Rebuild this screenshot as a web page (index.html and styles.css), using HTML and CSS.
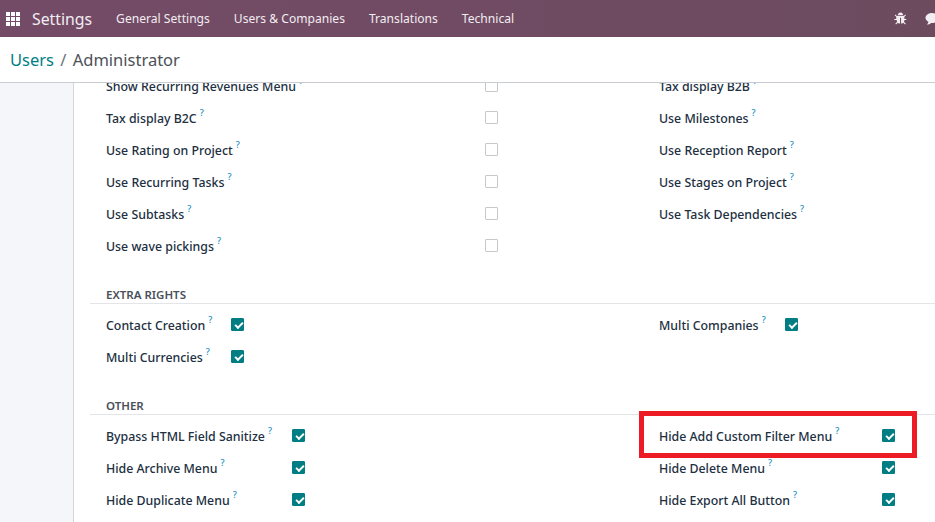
FILE: index.html
```html
<!DOCTYPE html>
<html lang="en">
<head>
<meta charset="utf-8">
<title>Users / Administrator</title>
<link rel="stylesheet" href="styles.css">
</head>
<body>
<header class="navbar">
  <svg class="apps" viewBox="0 0 14 14" width="14" height="14"><path fill="#fff" d="M0 0h4v4H0zM5 0h4v4H5zM10 0h4v4h-4zM0 5h4v4H0zM5 5h4v4H5zM10 5h4v4h-4zM0 10h4v4H0zM5 10h4v4H5zM10 10h4v4h-4z"/></svg>
  <span class="brand">Settings</span>
  <nav class="menu">
    <a>General Settings</a>
    <a>Users &amp; Companies</a>
    <a>Translations</a>
    <a>Technical</a>
  </nav>
  <div class="systray">
    <svg class="bug" viewBox="0 0 14 14" width="13" height="13"><path fill="#f2eef1" d="M4.300 3.200a2.700 2.700 0 0 1 5.400 0zM3.600 4h6.800l.2.200 1.500-1.500.8.800-1.700 1.700v2.300h2.100v1.100h-2.100c0 .8-.2 1.500-.5 2l2 2-.8.800-1.900-1.900c-.7.600-1.500 1-2.400 1V6.300H6.500v6.200c-.9 0-1.700-.4-2.400-1l-1.900 1.900-.8-.8 2-2c-.3-.5-.5-1.200-.5-2H.3V7.500h2.100V5.200L.7 3.500l.8-.8L3 4.200z"/></svg>
    <svg class="chat" viewBox="0 0 14 14" width="14" height="14"><path fill="#f2eef1" d="M7 1c3.600 0 6.500 2.200 6.500 5S10.600 11 7 11l-1-.1C5 11.900 3.500 12.500 2 12.500c.8-.8 1.300-1.800 1.400-2.700C1.700 8.900.5 7.500.5 6 .5 3.200 3.400 1 7 1z"/></svg>
  </div>
</header>
<div class="control">
  <h1 class="crumbs"><a>Users</a> <span class="sep">/</span> <span>Administrator</span></h1>
</div>
<main class="content">
  <aside class="side"></aside>
  <div class="sheet">
    <section class="group group-top">
      <div class="row"><div class="field"><label>Show Recurring Revenues Menu<sup>?</sup></label><i class="box"></i></div><div class="field"><label>Tax display B2B<sup>?</sup></label></div></div>
      <div class="row"><div class="field"><label>Tax display B2C<sup>?</sup></label><i class="box"></i></div><div class="field"><label>Use Milestones<sup>?</sup></label></div></div>
      <div class="row"><div class="field"><label>Use Rating on Project<sup>?</sup></label><i class="box"></i></div><div class="field"><label>Use Reception Report<sup>?</sup></label></div></div>
      <div class="row"><div class="field"><label>Use Recurring Tasks<sup>?</sup></label><i class="box"></i></div><div class="field"><label>Use Stages on Project<sup>?</sup></label></div></div>
      <div class="row"><div class="field"><label>Use Subtasks<sup>?</sup></label><i class="box"></i></div><div class="field"><label>Use Task Dependencies<sup>?</sup></label></div></div>
      <div class="row"><div class="field"><label>Use wave pickings<sup>?</sup></label><i class="box"></i></div></div>
    </section>
    <section class="group group-extra">
      <h2>EXTRA RIGHTS</h2>
      <div class="row"><div class="field"><label>Contact Creation<sup>?</sup></label><i class="box on"></i></div><div class="field"><label>Multi Companies<sup>?</sup></label><i class="box on"></i></div></div>
      <div class="row"><div class="field"><label>Multi Currencies<sup>?</sup></label><i class="box on"></i></div></div>
    </section>
    <section class="group group-other">
      <h2>OTHER</h2>
      <div class="row"><div class="field"><label>Bypass HTML Field Sanitize<sup>?</sup></label><i class="box on"></i></div><div class="field highlighted"><label>Hide Add Custom Filter Menu<sup>?</sup></label><i class="box on"></i><span class="redbox"></span></div></div>
      <div class="row"><div class="field"><label>Hide Archive Menu<sup>?</sup></label><i class="box on"></i></div><div class="field"><label>Hide Delete Menu<sup>?</sup></label><i class="box on"></i></div></div>
      <div class="row"><div class="field"><label>Hide Duplicate Menu<sup>?</sup></label><i class="box on"></i></div><div class="field"><label>Hide Export All Button<sup>?</sup></label><i class="box on"></i></div></div>
    </section>
  </div>
</main>
</body>
</html>
```
FILE: styles.css
```css
* { box-sizing: border-box; }
html, body { margin: 0; height: 100%; overflow: hidden; }
body {
  width: 935px;
  height: 522px;
  display: flex;
  flex-direction: column;
  font-family: "Noto Sans", "Open Sans", sans-serif;
  font-size: 13px;
  color: #212529;
  background: #fff;
}
.navbar {
  flex: none;
  height: 37px;
  display: flex;
  align-items: center;
  padding-left: 6px;
  background: linear-gradient(90deg, #744b67, #6c4b5f);
  color: #fff;
}
.apps { flex: none; }
.brand { font-size: 15.800px; margin-left: 12px; color: #f2edf1; }
.menu { display: flex; gap: 24px; margin-left: 24px; font-size: 12.100px; color: #f2edf1; }
.systray { margin-left: auto; display: flex; align-items: center; gap: 18px; margin-right: -4px; }
.control {
  flex: none;
  height: 46px;
  display: flex;
  align-items: center;
  padding-left: 10px;
  border-bottom: 1px solid #c9ccd2;
}
.crumbs { margin: 0; font-size: 16.500px; font-weight: 400; color: #4c5157; }
.crumbs a { color: #017e84; }
.sep { color: #6c7278; margin: 0 2px; }
.content { flex: 1; min-height: 0; display: flex; overflow: hidden; }
.side { flex: none; width: 74px; background: #f5f6f9; border-right: 1px solid #d3d5da; }
.sheet { flex: 1; margin-top: -13px; padding-left: 16px; }
.row { display: flex; height: 32px; padding-left: 16px; }
.field { position: relative; flex: none; width: 553px; display: flex; align-items: center; height: 32px; }
.field label { flex: none; width: var(--left-label); color: #212f3f; white-space: nowrap; font-weight: 500; font-size: 12.350px; }
.field + .field label { width: var(--right-label); }
.field sup { font-size: 9px; color: #1b8ec2; margin-left: 3px; line-height: 0; position: relative; top: -1px; vertical-align: super; }
.box { flex: none; width: 13px; height: 13px; border: 1px solid #c5c8cd; background: #fff; border-radius: 1px; position: relative; top: -1px; }
.box.on { background: #017e84; border-color: #017e84; }
.box.on::after {
  content: "";
  position: absolute;
  left: 3px;
  top: 3px;
  width: 6px;
  height: 3px;
  border-left: 2px solid #fff;
  border-bottom: 2px solid #fff;
  transform: rotate(-45deg);
}
.group-top { --left-label: 379px; --right-label: 223px; }
.group-extra { --left-label: 125px; --right-label: 126px; }
.group-other { --left-label: 186px; --right-label: 223px; }
.group h2 {
  margin: 0 0 5px;
  padding-left: 16px;
  height: 17px;
  line-height: 15px;
  font-size: 11.500px;
  font-weight: 600;
  color: #4a505a;
  border-bottom: 1px solid #e4e5e8;
}
.group-top { margin-bottom: 25px; }
.group-extra { margin-bottom: 25px; }
.redbox {
  position: absolute;
  left: -20px;
  top: -9px;
  width: 278px;
  height: 47px;
  border: 5px solid #ed1c24;
  pointer-events: none;
}
```
